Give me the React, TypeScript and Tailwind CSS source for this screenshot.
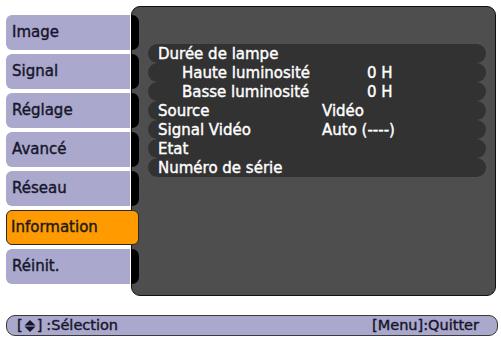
import React from "react";

const tabs = ["Image", "Signal", "Réglage", "Avancé", "Réseau", "Information", "Réinit."];
const rows: { label: string; value?: string; indent?: boolean; valuePad?: boolean }[] = [
  { label: "Durée de lampe" },
  { label: "Haute luminosité", value: "0 H", indent: true, valuePad: true },
  { label: "Basse luminosité", value: "0 H", indent: true, valuePad: true },
  { label: "Source", value: "Vidéo" },
  { label: "Signal Vidéo", value: "Auto (----)" },
  { label: "Etat" },
  { label: "Numéro de série" },
];

export default function App() {
  return (
    <div className="w-[501px] h-[339px] bg-white overflow-hidden font-['DejaVu_Sans',sans-serif] [-webkit-text-stroke:0.4px]">
      <div className="flex pt-[6px]">
        <div className="relative z-10 ml-[6px] mt-[9px] flex flex-col gap-[4px] w-[133px]">
          {tabs.map((t) =>
            t === "Information" ? (
              <div
                key={t}
                className="h-[35px] w-[133px] rounded-[6px] border border-[#2a2a2a] bg-[#ff9a00] flex items-center pl-[4px] text-[15px] text-[#1a1a1a]"
              >
                {t}
              </div>
            ) : (
              <div key={t} className="h-[35px] flex">
                <div className="w-[124px] rounded-l-[6px] bg-[#aaa8cc] flex items-center pl-[6px] text-[15px] text-[#16162a]">
                  {t}
                </div>
                <div className="ml-[1px] w-[8px] rounded-r-[7px] bg-black" />
              </div>
            )
          )}
        </div>
        <div className="ml-[-8px] w-[365px] h-[290px] rounded-[9px] border border-[#111] bg-[#4e4e4e] pt-[37px] pl-[16px]">
          <div className="w-[338px] flex flex-col">
            {rows.map((r) => (
              <div
                key={r.label}
                className="h-[19px] rounded-full bg-[#323232] flex items-center pl-[10px] pt-[2px] text-[15px] text-white leading-none"
              >
                <div className={r.indent ? "w-[164px] pl-[24px]" : "w-[164px]"}>{r.label}</div>
                {r.value && <div className={r.valuePad ? "pl-[45px]" : ""}>{r.value}</div>}
              </div>
            ))}
          </div>
        </div>
      </div>
      <div className="mt-[19px] ml-[6px] w-[492px] h-[21px] rounded-[9px] border border-[#3a3a3a] bg-[#aaa8cc] flex items-center justify-between pl-[10px] pr-[18px] text-[14.5px] text-[#16162a]">
        <div className="flex items-center">
          <span>[</span>
          <svg width="12" height="12" viewBox="0 0 12 12" className="mx-[1px]">
            <path d="M6 0 L11.5 5.4 H0.5 Z" fill="#16162a" />
            <path d="M0.5 6.6 H11.5 L6 12 Z" fill="#16162a" />
          </svg>
          <span>]</span>
          <span className="ml-[4px]">:Sélection</span>
        </div>
        <div>[Menu]:Quitter</div>
      </div>
    </div>
  );
}
